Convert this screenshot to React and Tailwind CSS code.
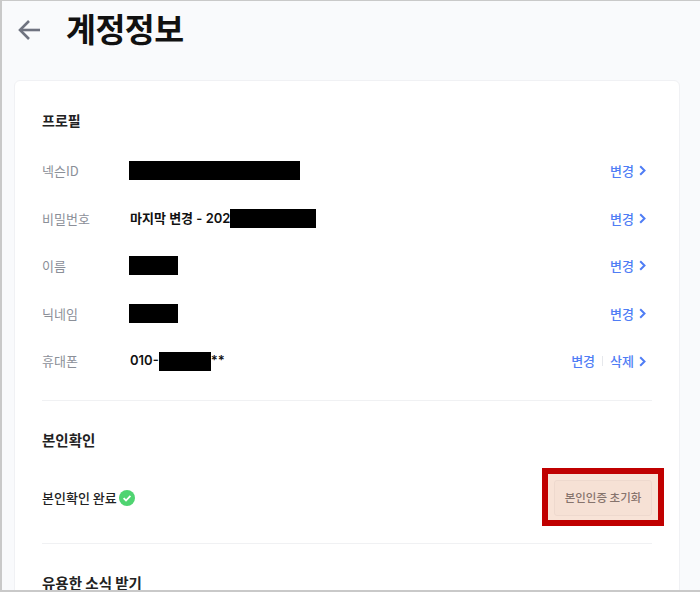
const font = { k: "font-['Noto_Sans_CJK_KR','Noto_Sans',sans-serif]", v: "font-['Inter','Noto_Sans_CJK_KR',sans-serif]" };

function Mask({ className }) {
    return <span className={`inline-block bg-black h-[19px] ${className}`}></span>;
}

function Chevron() {
    return (
        <svg className="ml-[5px] mr-[6px]" width="7" height="11" viewBox="0 0 7 11" fill="none" stroke="currentColor" strokeWidth="2">
            <path d="M1.2 1.2L5.5 5.5L1.2 9.8" />
        </svg>
    );
}

function Row({ label, children, actions = ["변경"] }) {
    return (
        <div className="flex items-center h-[47.6px]">
            <div className="w-[87px] text-[13px] text-[#8b8f98]">{label}</div>
            <div className={`flex-1 flex items-center text-[13px] font-semibold text-[#111] ${font.v}`}>{children}</div>
            <div className="flex items-center text-[13px] font-medium text-[#4f7df5]">
                {actions.map((a, i) => (
                    <span key={a} className="flex items-center">
                        {i > 0 && <span className="w-px h-[10px] bg-[#e6e8ec] mx-[7px]"></span>}
                        {a}
                    </span>
                ))}
                <Chevron />
            </div>
        </div>
    );
}

export default function App() {
    return (
        <div className={`relative w-[700px] h-[592px] overflow-hidden bg-[#f9fafc] border-t border-l-2 border-b-2 border-[#c9c9c9] ${font.k}`}>

            {/* HEADER */}
            <div className="flex items-center h-[57px] pl-[15px]">
                <svg width="25" height="22" viewBox="0 0 25 22" fill="none" stroke="#6f7380" strokeWidth="2.6">
                    <path d="M23 11H3" />
                    <path d="M12 2L3 11L12 20" />
                </svg>
                <h1 className="ml-[24px] mb-[3px] text-[32.5px] leading-none font-bold text-[#111] tracking-[-0.5px]">계정정보</h1>
            </div>

            {/* CARD */}
            <div className="mt-[22px] ml-[12px] w-[666px] h-[600px] bg-white rounded-[6px] border border-[#f0f1f4] pl-[27px] pr-[27px]">

                <h2 className="mt-[29px] h-[20px] leading-[20px] text-[14px] font-bold text-[#222]">프로필</h2>

                <div className="mt-[17px]">
                    <Row label="넥슨ID">
                        <Mask className="w-[171px]" />
                    </Row>
                    <Row label="비밀번호">
                        <span className="ml-px">마지막 변경 - 202</span>
                        <Mask className="w-[86px]" />
                    </Row>
                    <Row label="이름">
                        <Mask className="w-[49px]" />
                    </Row>
                    <Row label="닉네임">
                        <Mask className="w-[49px]" />
                    </Row>
                    <Row label="휴대폰" actions={["변경", "삭제"]}>
                        <span className="ml-px">010-</span>
                        <Mask className="w-[52px]" />
                        <span>**</span>
                    </Row>
                </div>

                <div className="mt-[15px] border-t border-[#f0f1f3]"></div>

                <h2 className="mt-[29px] h-[20px] leading-[20px] text-[14.5px] font-bold text-[#222]">본인확인</h2>

                <div className="mt-[18px] h-[60px] flex items-center justify-between">
                    <div className="flex items-center text-[13px] font-medium text-[#222]">
                        본인확인 완료
                        <svg className="ml-[2px]" width="16" height="16" viewBox="0 0 16 16" fill="none">
                            <circle cx="8" cy="8" r="8" fill="#4fd471" />
                            <path d="M4.6 8.2L7 10.5L11.4 5.9" stroke="#fff" strokeWidth="1.8" />
                        </svg>
                    </div>
                    <button className="flex items-center justify-center w-[98px] h-[36px] bg-[#fdfdfd] border border-[#f1f1f3] rounded-[3px] text-[11.5px] font-medium text-[#5c6068]">
                        본인인증 초기화
                    </button>
                </div>

                <div className="mt-[15px] border-t border-[#f0f1f3]"></div>

                <h2 className="mt-[29px] h-[20px] leading-[20px] text-[14.5px] font-bold text-[#222]">유용한 소식 받기</h2>
            </div>

            {/* ANNOTATION BOX */}
            <div className="absolute left-[540px] top-[467px] w-[122px] h-[58px] border-[6px] border-[#c00000] bg-[#e8a27a]/30"></div>
        </div>
    );
}
